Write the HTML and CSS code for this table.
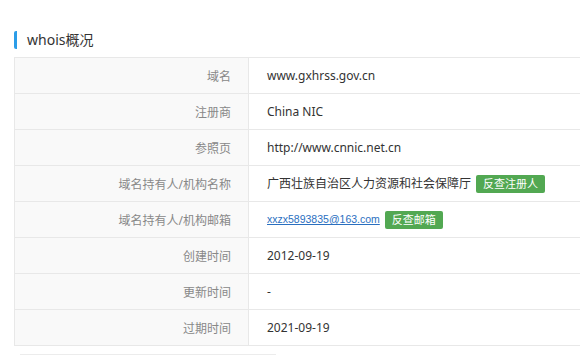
FILE: index.html
```html
<!DOCTYPE html>
<html>
<head>
<meta charset="utf-8">
<link rel="stylesheet" href="styles.css">
</head>
<body>
<div class="page">
  <h2 class="title">whois概况</h2>
  <table class="whois">
    <tr><th>域名</th><td>www.gxhrss.gov.cn</td></tr>
    <tr><th>注册商</th><td>China NIC</td></tr>
    <tr><th>参照页</th><td>http://www.cnnic.net.cn</td></tr>
    <tr><th>域名持有人/机构名称</th><td>广西壮族自治区人力资源和社会保障厅<span class="btn">反查注册人</span></td></tr>
    <tr><th>域名持有人/机构邮箱</th><td><a class="mail" href="#">xxzx5893835@163.com</a><span class="btn">反查邮箱</span></td></tr>
    <tr><th>创建时间</th><td>2012-09-19</td></tr>
    <tr><th>更新时间</th><td>-</td></tr>
    <tr><th>过期时间</th><td>2021-09-19</td></tr>
  </table>
  <div class="next"></div>
</div>
</body>
</html>
```
FILE: styles.css
```css
html, body {
  margin: 0;
  padding: 0;
  background: #fff;
  overflow: hidden;
}
.page {
  padding: 31px 0 0 14px;
  font-family: "Noto Sans", "Noto Sans CJK SC", sans-serif;
  color: #333;
}
.title {
  margin: 0 0 8px 0;
  height: 18px;
  line-height: 18px;
  font-size: 14px;
  font-weight: normal;
  color: #333;
  border-left: 3px solid #2b9de8;
  border-radius: 2px;
  padding-left: 10px;
}
.whois {
  border-collapse: collapse;
  width: 566px;
  border: 1px solid #e8e8e8;
  border-right: none;
}
.whois th, .whois td {
  height: 35px;
  padding: 0;
  border-top: 1px solid #e8e8e8;
  vertical-align: middle;
}
.whois th {
  width: 216px;
  padding-right: 17px;
  text-align: right;
  background: #f9f9f9;
  border-right: 1px solid #e8e8e8;
  font-weight: normal;
  font-size: 12px;
  color: #888;
}
.whois td {
  padding-left: 18px;
  font-size: 12px;
  color: #333;
}
.mail {
  font-family: "Liberation Sans", sans-serif;
  font-size: 10.5px;
  color: #2a6fbf;
  text-decoration: underline;
}
.btn {
  display: inline-block;
  margin-left: 5px;
  padding: 0 7px;
  height: 18px;
  line-height: 18px;
  font-size: 11px;
  color: #fff;
  background: #52a852;
  border-radius: 2px;
  vertical-align: middle;
}
.next {
  margin: 8px 0 0 6px;
  width: 256px;
  height: 4px;
  border-top: 1px solid #ececec;
}
```
